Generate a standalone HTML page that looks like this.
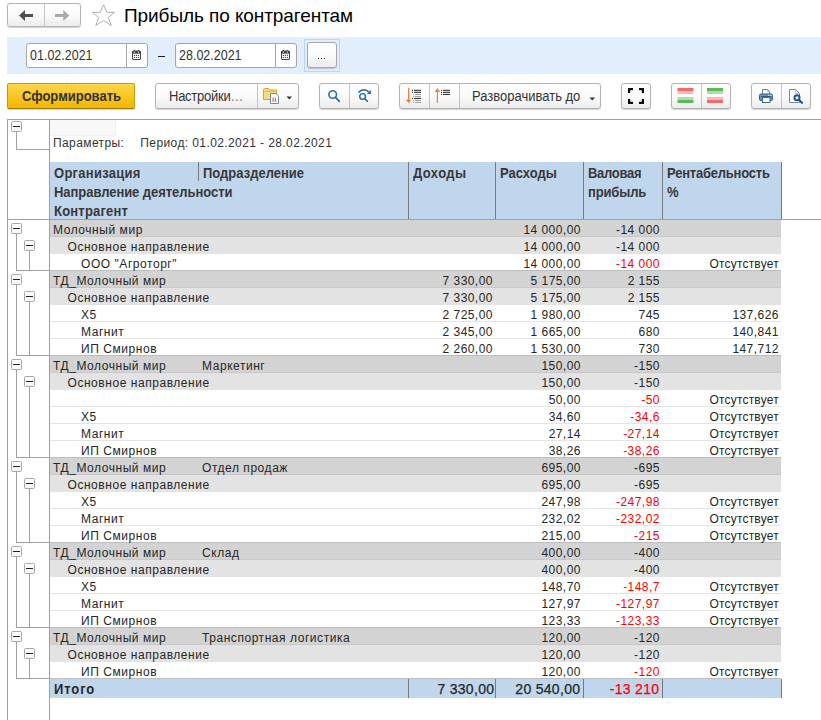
<!DOCTYPE html>
<html><head><meta charset="utf-8"><title>Прибыль по контрагентам</title>
<style>
*{margin:0;padding:0;box-sizing:border-box}
html,body{width:821px;height:720px;overflow:hidden;background:#fff}
body{position:relative;font-family:"Liberation Sans",sans-serif;color:#333}
.abs{position:absolute}
.btn{position:absolute;border:1px solid #b3b3b3;border-radius:3px;background:linear-gradient(#ffffff 0%,#fbfbfb 50%,#ececec 100%);box-shadow:0 1px 1px rgba(0,0,0,0.18)}
.dv{position:absolute;top:0;bottom:0;width:1px;background:#c4c4c4}
.title{position:absolute;left:124px;top:5px;font-size:19px;letter-spacing:-0.08px;color:#000;line-height:22px;white-space:nowrap}
.panel{position:absolute;left:7px;top:37px;width:814px;height:37px;background:#e2eefb}
.inp{position:absolute;top:43px;height:25px;background:#fff;border:1px solid #a6a6a6;border-radius:3px}
.inp .tx{position:absolute;left:3px;top:3px;font-size:12.5px;color:#333;line-height:16px;letter-spacing:0;transform:scaleY(1.1);transform-origin:0 0}
.inp .cd{position:absolute;top:0;bottom:0;width:1px;background:#a6a6a6}
.lbl{position:absolute;white-space:nowrap;line-height:16px}
.tbl{position:absolute;left:0;top:0;width:821px;height:720px}
.tb-top{position:absolute;left:7px;top:119px;width:814px;height:1px;background:#a0a0a0}
.tb-left{position:absolute;left:7px;top:119px;width:1px;height:601px;background:#a0a0a0}
.tb-tree{position:absolute;left:49px;top:119px;width:1px;height:601px;background:#a0a0a0}
.fbox{position:absolute;left:50px;top:120px;width:66px;height:16px;background:#f8f8f8;border:1px solid #f0f0f0;border-top:0;border-left:0}
.bx{position:absolute;width:11px;height:11px;border:1px solid #a8a8a8;border-radius:1.5px;background:linear-gradient(#fff,#f4f4f4)}
.bx:after{content:"";position:absolute;left:1px;top:4px;width:7px;height:1px;background:#222}
.vl{position:absolute;width:1px;background:#a0a0a0}
.hl{position:absolute;height:1px;background:#a0a0a0}
.params{position:absolute;left:53px;top:135px;font-size:12px;letter-spacing:0.4px;line-height:17px;color:#333;white-space:nowrap}
.params .per{margin-left:16px}
.hdr{position:absolute;left:50px;top:162px;width:732px;height:57px;background:#bfd6ed}
.h{position:absolute;font-size:13px;font-weight:bold;letter-spacing:0px;line-height:17px;color:#383838;transform:scaleY(1.08);transform-origin:0 0;white-space:nowrap}
.hv{position:absolute;top:0;width:1px;height:57px;background:#7a7a7a}
.hline{position:absolute;left:7px;width:814px;height:1px;background:#a0a0a0}
.row{position:absolute;left:50px;width:731px;height:17px}
.rg1{background:#d3d3d3;border-bottom:1px solid #c8c8c8}
.rg2{background:#e3e3e3}
.rd{background:#fff;border-bottom:1px solid #e4e4e4}
.rd.last{border-bottom-color:#bdbdbd}
.row span,.tot span{position:absolute;top:2px;font-size:12px;line-height:16px;letter-spacing:0px;color:#262626;white-space:nowrap}
.row .n{letter-spacing:0.45px}
.row .t{letter-spacing:0.55px}
.row .ot{letter-spacing:0.2px}
.red{color:#f00 !important}
.tot{position:absolute;left:50px;width:732px;height:19px;background:#bfd6ed}
.tot span{top:2px}
.tot .it{font-weight:bold;font-size:13px;letter-spacing:0.9px;color:#2a2a2a;transform:scaleY(1.1);transform-origin:0 0}
.tot .tn{font-size:14px;letter-spacing:0.3px;-webkit-text-stroke:0.25px currentColor}
.tv{position:absolute;top:0;width:1px;height:19px;background:#7a7a7a}

</style></head><body>
<div class="btn" style="left:7px;top:3px;width:74px;height:24px"><div class="dv" style="left:36px"></div>
<svg class="abs" style="left:-1px;top:-1px" width="74" height="24" viewBox="7 3 74 24">
<path d="M19 15.4 L25 10 L25 14 L33 14 L33 17 L25 17 L25 21 Z" fill="#4f4f4f"/>
<path d="M69.3 15.4 L63.3 10 L63.3 14 L55 14 L55 17 L63.3 17 L63.3 21 Z" fill="#a9a9a9"/>
</svg></div>
<svg class="abs" style="left:88px;top:2px" width="30" height="26" viewBox="88 2 30 26">
<path d="M103.6 4.8 L106.9 12.3 L114.5 12.3 L108.4 17.5 L111.2 25.5 L103.6 20.5 L95.8 25.5 L98.6 17.5 L92.4 12.3 L100.2 12.3 Z" fill="none" stroke="#aab1b8" stroke-width="1" stroke-linejoin="miter"/>
</svg>
<div class="title">Прибыль по контрагентам</div>
<div class="panel"></div>
<div class="inp" style="left:26px;width:122px"><span class="tx">01.02.2021</span><div class="cd" style="left:99px"></div>
<svg class="abs" style="left:104px;top:5px" width="12" height="12" viewBox="131 49 12 12"><path d="M132.5 52 Q132.5 51 133.5 51 L139.5 51 Q140.5 51 140.5 52 L140.5 59 Q140.5 59.5 140 59.5 L133 59.5 Q132.5 59.5 132.5 59 Z" fill="#fff" stroke="#444" stroke-width="1"/><rect x="132" y="51" width="9" height="2.7" fill="#444"/><rect x="133.9" y="51.6" width="1.1" height="1.1" fill="#fff"/><rect x="137.9" y="51.6" width="1.1" height="1.1" fill="#fff"/><circle cx="134.4" cy="50.4" r="0.6" fill="#444"/><circle cx="138.4" cy="50.4" r="0.6" fill="#444"/><g fill="#444"><circle cx="134.4" cy="55.4" r="0.65"/><circle cx="136.4" cy="55.4" r="0.65"/><circle cx="138.4" cy="55.4" r="0.65"/><circle cx="134.4" cy="57.4" r="0.65"/><circle cx="136.4" cy="57.4" r="0.65"/><circle cx="138.4" cy="57.4" r="0.65"/></g></svg>
</div>
<div class="abs" style="left:158px;top:56px;width:7px;height:1.2px;background:#222"></div>
<div class="inp" style="left:175px;width:122px"><span class="tx">28.02.2021</span><div class="cd" style="left:99px"></div>
<svg class="abs" style="left:104px;top:5px" width="12" height="12" viewBox="131 49 12 12"><path d="M132.5 52 Q132.5 51 133.5 51 L139.5 51 Q140.5 51 140.5 52 L140.5 59 Q140.5 59.5 140 59.5 L133 59.5 Q132.5 59.5 132.5 59 Z" fill="#fff" stroke="#444" stroke-width="1"/><rect x="132" y="51" width="9" height="2.7" fill="#444"/><rect x="133.9" y="51.6" width="1.1" height="1.1" fill="#fff"/><rect x="137.9" y="51.6" width="1.1" height="1.1" fill="#fff"/><circle cx="134.4" cy="50.4" r="0.6" fill="#444"/><circle cx="138.4" cy="50.4" r="0.6" fill="#444"/><g fill="#444"><circle cx="134.4" cy="55.4" r="0.65"/><circle cx="136.4" cy="55.4" r="0.65"/><circle cx="138.4" cy="55.4" r="0.65"/><circle cx="134.4" cy="57.4" r="0.65"/><circle cx="136.4" cy="57.4" r="0.65"/><circle cx="138.4" cy="57.4" r="0.65"/></g></svg>
</div>
<div class="abs" style="left:304px;top:39px;width:36px;height:33px;border:1px solid #b6d8f6;background:#e2eefb"></div>
<div class="btn" style="left:307px;top:42px;width:30px;height:26px;border-color:#a8a8a8"><div class="abs" style="left:10px;top:15px;width:1.2px;height:1.2px;background:#333"></div><div class="abs" style="left:13px;top:15px;width:1.2px;height:1.2px;background:#333"></div><div class="abs" style="left:16px;top:15px;width:1.2px;height:1.2px;background:#333"></div></div>

<div class="btn" style="left:7px;top:83px;width:128px;height:26px;border-color:#c99a00 #c99a00 #a07a00;border-radius:2px;background:linear-gradient(#fed64a,#f3b600)"><span class="lbl" style="left:14px;top:3.5px;font-size:13px;font-weight:bold;color:#333;transform:scaleY(1.08);transform-origin:0 0">Сформировать</span></div>

<div class="btn" style="left:155px;top:83px;width:144px;height:26px"><div class="dv" style="left:101px"></div><span class="lbl" style="left:13px;top:3.5px;font-size:13px;letter-spacing:-0.25px;color:#333;transform:scaleY(1.1);transform-origin:0 0">Настройки</span><span class="lbl" style="left:75px;top:3.5px;font-size:13px;letter-spacing:0.5px;color:#777;transform:scaleY(1.1);transform-origin:0 0">...</span>
<svg class="abs" style="left:106px;top:2px" width="18" height="18" viewBox="262 86 18 18">
<path d="M263.5 89.5 L265 88.5 L268.5 88.5 L269.5 90 L276.5 90 L276.5 99.5 L263.5 99.5 Z" fill="#f7dc82" stroke="#d8a032" stroke-width="1"/><path d="M263.5 91.5 L276.5 91.5" stroke="#e9be55" stroke-width="1"/>
<path d="M270.5 93.5 L276 93.5 L278.5 96 L278.5 103.5 L270.5 103.5 Z" fill="#fff" stroke="#71879a" stroke-width="1"/>
<rect x="272.6" y="97.5" width="1" height="3.5" fill="#e53935"/><rect x="274.8" y="97.5" width="1" height="3.5" fill="#43a047"/><rect x="272" y="101" width="5" height="0.6" fill="#999"/>
</svg>
<svg class="abs" style="left:130px;top:12px" width="7" height="4" viewBox="0 0 7 4"><path d="M0.5 0.5 L6 0.5 L3.25 3.5 Z" fill="#333"/></svg>
</div>

<div class="btn" style="left:319px;top:83px;width:60px;height:26px"><div class="dv" style="left:29px"></div>
<svg class="abs" style="left:-1px;top:-1px" width="60" height="25" viewBox="319 83 60 25">
<circle cx="332.7" cy="94.5" r="3.8" fill="none" stroke="#2a6ea6" stroke-width="1.6"/>
<path d="M335.5 97.3 L339.3 101.3" stroke="#2a6ea6" stroke-width="1.8" stroke-linecap="round"/>
<circle cx="362.6" cy="96.5" r="2.85" fill="none" stroke="#1f68a6" stroke-width="1.4"/>
<path d="M364.8 98.7 L367.4 101.3" stroke="#1f68a6" stroke-width="1.6" stroke-linecap="round"/>
<path d="M358.3 92.6 Q363 87.6 368.6 91.6" fill="none" stroke="#1f68a6" stroke-width="1.5"/>
<path d="M370.9 89.8 L370.9 93.9 L366.8 93.9 Z" fill="#1f68a6"/>
</svg></div>

<div class="btn" style="left:399px;top:83px;width:202px;height:26px"><div class="dv" style="left:29px"></div><div class="dv" style="left:59px"></div>
<svg class="abs" style="left:-1px;top:-1px" width="60" height="25" viewBox="399 83 60 25">
<rect x="408" y="88" width="1.2" height="12" fill="#f08040"/>
<path d="M405.8 99.5 L411.4 99.5 L408.6 103.2 Z" fill="#f08040"/>
<g fill="#222"><rect x="412" y="89.8" width="1" height="1"/><rect x="414" y="89.8" width="7" height="1"/><rect x="412" y="91.8" width="1" height="1"/><rect x="414" y="91.8" width="7" height="1"/><rect x="412" y="97.9" width="1" height="1"/><rect x="414" y="97.9" width="7" height="1"/></g>
<g fill="#999"><rect x="413" y="93.9" width="1" height="1"/><rect x="415" y="93.9" width="6" height="1"/><rect x="413" y="95.9" width="1" height="1"/><rect x="415" y="95.9" width="6" height="1"/><rect x="413" y="99.9" width="1" height="1"/><rect x="415" y="99.9" width="6" height="1"/><rect x="413" y="101.9" width="1" height="1"/><rect x="415" y="101.9" width="6" height="1"/></g>
<rect x="436.8" y="91" width="1.2" height="12" fill="#f08040"/>
<path d="M434.6 92 L440.2 92 L437.4 88 Z" fill="#f08040"/>
<g fill="#222"><rect x="441" y="89.8" width="1" height="1"/><rect x="443" y="89.8" width="7" height="1"/><rect x="441" y="91.8" width="1" height="1"/><rect x="443" y="91.8" width="7" height="1"/><rect x="441" y="93.9" width="1" height="1"/><rect x="443" y="93.9" width="7" height="1"/></g>
</svg>
<span class="lbl" style="left:72px;top:4px;font-size:13px;color:#333;transform:scaleY(1.1);transform-origin:0 0">Разворачивать до</span>
<svg class="abs" style="left:189px;top:13px" width="7" height="4" viewBox="0 0 7 4"><path d="M0.5 0.5 L6 0.5 L3.25 3.5 Z" fill="#333"/></svg>
</div>

<div class="btn" style="left:621px;top:83px;width:30px;height:26px">
<svg class="abs" style="left:-1px;top:-1px" width="30" height="25" viewBox="621 83 30 25">
<g fill="#0a0a0a"><rect x="628" y="88" width="5" height="2.2"/><rect x="628" y="88" width="2.2" height="5"/><rect x="639" y="88" width="5" height="2.2"/><rect x="641.8" y="88" width="2.2" height="5"/><rect x="628" y="101.8" width="5" height="2.2"/><rect x="628" y="99" width="2.2" height="5"/><rect x="639" y="101.8" width="5" height="2.2"/><rect x="641.8" y="99" width="2.2" height="5"/></g>
</svg></div>

<div class="btn" style="left:671px;top:83px;width:60px;height:26px"><div class="dv" style="left:29px"></div>
<svg class="abs" style="left:-1px;top:-1px" width="60" height="25" viewBox="671 83 60 25">
<rect x="677.5" y="88" width="16" height="3" fill="#f26b6b"/><rect x="677.5" y="91" width="16" height="3" fill="#f6b9b9"/>
<rect x="677.5" y="97" width="16" height="3" fill="#b0dab0"/><rect x="677.5" y="100" width="16" height="3" fill="#5cb85c"/>
<rect x="707" y="88" width="16" height="3" fill="#5cb85c"/><rect x="707" y="91" width="16" height="3" fill="#b0dab0"/>
<rect x="707" y="97" width="16" height="3" fill="#f6b9b9"/><rect x="707" y="100" width="16" height="3" fill="#f26b6b"/>
</svg></div>

<div class="btn" style="left:751px;top:83px;width:60px;height:26px"><div class="dv" style="left:29px"></div>
<svg class="abs" style="left:-1px;top:-1px" width="60" height="25" viewBox="751 83 60 25">
<path d="M762.5 94 L762.5 89.5 L767.5 89.5 L769.5 91.5 L769.5 94" fill="#fff" stroke="#6f7f90" stroke-width="1"/>
<path d="M767.5 89.5 L767.5 91.5 L769.5 91.5" fill="none" stroke="#9aa8b6" stroke-width="0.8"/>
<rect x="759.5" y="94" width="13" height="6.5" rx="1.5" fill="#6b95c3" stroke="#2f5c8c" stroke-width="1"/>
<rect x="761" y="96" width="10" height="1" fill="#2f5c8c"/>
<rect x="768.3" y="94.8" width="1.2" height="1" fill="#fff"/><rect x="770.3" y="94.8" width="1.2" height="1" fill="#fff"/>
<rect x="762.5" y="97.5" width="7.5" height="5" fill="#fff" stroke="#3d6a99" stroke-width="1"/>
<path d="M789.5 89.5 L795.5 89.5 L799.5 93.5 L799.5 102.5 L789.5 102.5 Z" fill="#fff" stroke="#74889c" stroke-width="1"/>
<path d="M795.5 89.5 L795.5 93.5 L799.5 93.5" fill="none" stroke="#a8b4c0" stroke-width="0.8"/>
<circle cx="797" cy="97.8" r="2.5" fill="#fff" stroke="#1c5486" stroke-width="2"/>
<path d="M799 100 L802 102.8" stroke="#1c5486" stroke-width="2.2" stroke-linecap="round"/>
</svg></div>

<div class="tbl">
<div class="tb-top"></div>
<div class="tb-left"></div>
<div class="tb-tree"></div>
<div class="fbox"></div>
<div class="bx" style="left:11px;top:121px"></div>
<div class="vl" style="left:16px;top:132px;height:17px"></div>
<div class="hl" style="left:16px;top:149px;width:33px"></div>
<div class="params"><span>Параметры:</span><span class="per">Период: 01.02.2021 - 28.02.2021</span></div>
<div class="hdr">
 <span class="h" style="left:4px;top:2px;letter-spacing:0.27px">Организация</span>
 <span class="h" style="left:4px;top:21px;letter-spacing:-0.05px">Направление деятельности</span>
 <span class="h" style="left:4px;top:40px;letter-spacing:0.2px">Контрагент</span>
 <span class="h" style="left:153px;top:2px;letter-spacing:0px">Подразделение</span>
 <span class="h" style="left:363px;top:2px;letter-spacing:0.4px">Доходы</span>
 <span class="h" style="left:450px;top:2px">Расходы</span>
 <span class="h" style="left:538px;top:2px;letter-spacing:-0.3px">Валовая</span>
 <span class="h" style="left:538px;top:21px;letter-spacing:-0.15px">прибыль</span>
 <span class="h" style="left:617px;top:2px;letter-spacing:-0.22px">Рентабельность</span>
 <span class="h" style="left:617px;top:21px">%</span>
 <div class="hv" style="left:148px;height:19px"></div>
 <div class="hv" style="left:358px"></div>
 <div class="hv" style="left:445px"></div>
 <div class="hv" style="left:533px"></div>
 <div class="hv" style="left:612px"></div>
 <div class="hv" style="left:731px"></div>
</div>
<div class="hline" style="top:219px"></div>
<div class="bx" style="left:11px;top:223px"></div><div class="vl" style="left:16px;top:234px;height:36px"></div><div class="bx" style="left:24px;top:240px"></div><div class="vl" style="left:29px;top:251px;height:19px"></div><div class="hl" style="left:16px;top:270px;width:33px"></div><div class="bx" style="left:11px;top:274px"></div><div class="vl" style="left:16px;top:285px;height:70px"></div><div class="bx" style="left:24px;top:291px"></div><div class="vl" style="left:29px;top:302px;height:53px"></div><div class="hl" style="left:16px;top:355px;width:33px"></div><div class="bx" style="left:11px;top:359px"></div><div class="vl" style="left:16px;top:370px;height:87px"></div><div class="bx" style="left:24px;top:376px"></div><div class="vl" style="left:29px;top:387px;height:70px"></div><div class="hl" style="left:16px;top:457px;width:33px"></div><div class="bx" style="left:11px;top:461px"></div><div class="vl" style="left:16px;top:472px;height:70px"></div><div class="bx" style="left:24px;top:478px"></div><div class="vl" style="left:29px;top:489px;height:53px"></div><div class="hl" style="left:16px;top:542px;width:33px"></div><div class="bx" style="left:11px;top:546px"></div><div class="vl" style="left:16px;top:557px;height:70px"></div><div class="bx" style="left:24px;top:563px"></div><div class="vl" style="left:29px;top:574px;height:53px"></div><div class="hl" style="left:16px;top:627px;width:33px"></div><div class="bx" style="left:11px;top:631px"></div><div class="vl" style="left:16px;top:642px;height:36px"></div><div class="bx" style="left:24px;top:648px"></div><div class="vl" style="left:29px;top:659px;height:19px"></div><div class="hl" style="left:16px;top:678px;width:33px"></div>
<div class="row rg1" style="top:220px"><span class="t" style="left:3px">Молочный мир</span><span class="n" style="right:200.1px">14 000,00</span><span class="n" style="right:121.1px">-14 000</span></div><div class="row rg2" style="top:237px"><span class="t" style="left:17.5px">Основное направление</span><span class="n" style="right:200.1px">14 000,00</span><span class="n" style="right:121.1px">-14 000</span></div><div class="row rd last" style="top:254px"><span class="t" style="left:31px">ООО "Агроторг"</span><span class="n" style="right:200.1px">14 000,00</span><span class="n red" style="right:121.1px">-14 000</span><span class="n ot" style="right:2.1px">Отсутствует</span></div><div class="row rg1" style="top:271px"><span class="t" style="left:3px">ТД_Молочный мир</span><span class="n" style="right:288.1px">7 330,00</span><span class="n" style="right:200.1px">5 175,00</span><span class="n" style="right:121.1px">2 155</span></div><div class="row rg2" style="top:288px"><span class="t" style="left:17.5px">Основное направление</span><span class="n" style="right:288.1px">7 330,00</span><span class="n" style="right:200.1px">5 175,00</span><span class="n" style="right:121.1px">2 155</span></div><div class="row rd" style="top:305px"><span class="t" style="left:31px">Х5</span><span class="n" style="right:288.1px">2 725,00</span><span class="n" style="right:200.1px">1 980,00</span><span class="n" style="right:121.1px">745</span><span class="n" style="right:2.1px">137,626</span></div><div class="row rd" style="top:322px"><span class="t" style="left:31px">Магнит</span><span class="n" style="right:288.1px">2 345,00</span><span class="n" style="right:200.1px">1 665,00</span><span class="n" style="right:121.1px">680</span><span class="n" style="right:2.1px">140,841</span></div><div class="row rd last" style="top:339px"><span class="t" style="left:31px">ИП Смирнов</span><span class="n" style="right:288.1px">2 260,00</span><span class="n" style="right:200.1px">1 530,00</span><span class="n" style="right:121.1px">730</span><span class="n" style="right:2.1px">147,712</span></div><div class="row rg1" style="top:356px"><span class="t" style="left:3px">ТД_Молочный мир</span><span class="t" style="left:152px">Маркетинг</span><span class="n" style="right:200.1px">150,00</span><span class="n" style="right:121.1px">-150</span></div><div class="row rg2" style="top:373px"><span class="t" style="left:17.5px">Основное направление</span><span class="n" style="right:200.1px">150,00</span><span class="n" style="right:121.1px">-150</span></div><div class="row rd" style="top:390px"><span class="n" style="right:200.1px">50,00</span><span class="n red" style="right:121.1px">-50</span><span class="n ot" style="right:2.1px">Отсутствует</span></div><div class="row rd" style="top:407px"><span class="t" style="left:31px">Х5</span><span class="n" style="right:200.1px">34,60</span><span class="n red" style="right:121.1px">-34,6</span><span class="n ot" style="right:2.1px">Отсутствует</span></div><div class="row rd" style="top:424px"><span class="t" style="left:31px">Магнит</span><span class="n" style="right:200.1px">27,14</span><span class="n red" style="right:121.1px">-27,14</span><span class="n ot" style="right:2.1px">Отсутствует</span></div><div class="row rd last" style="top:441px"><span class="t" style="left:31px">ИП Смирнов</span><span class="n" style="right:200.1px">38,26</span><span class="n red" style="right:121.1px">-38,26</span><span class="n ot" style="right:2.1px">Отсутствует</span></div><div class="row rg1" style="top:458px"><span class="t" style="left:3px">ТД_Молочный мир</span><span class="t" style="left:152px">Отдел продаж</span><span class="n" style="right:200.1px">695,00</span><span class="n" style="right:121.1px">-695</span></div><div class="row rg2" style="top:475px"><span class="t" style="left:17.5px">Основное направление</span><span class="n" style="right:200.1px">695,00</span><span class="n" style="right:121.1px">-695</span></div><div class="row rd" style="top:492px"><span class="t" style="left:31px">Х5</span><span class="n" style="right:200.1px">247,98</span><span class="n red" style="right:121.1px">-247,98</span><span class="n ot" style="right:2.1px">Отсутствует</span></div><div class="row rd" style="top:509px"><span class="t" style="left:31px">Магнит</span><span class="n" style="right:200.1px">232,02</span><span class="n red" style="right:121.1px">-232,02</span><span class="n ot" style="right:2.1px">Отсутствует</span></div><div class="row rd last" style="top:526px"><span class="t" style="left:31px">ИП Смирнов</span><span class="n" style="right:200.1px">215,00</span><span class="n red" style="right:121.1px">-215</span><span class="n ot" style="right:2.1px">Отсутствует</span></div><div class="row rg1" style="top:543px"><span class="t" style="left:3px">ТД_Молочный мир</span><span class="t" style="left:152px">Склад</span><span class="n" style="right:200.1px">400,00</span><span class="n" style="right:121.1px">-400</span></div><div class="row rg2" style="top:560px"><span class="t" style="left:17.5px">Основное направление</span><span class="n" style="right:200.1px">400,00</span><span class="n" style="right:121.1px">-400</span></div><div class="row rd" style="top:577px"><span class="t" style="left:31px">Х5</span><span class="n" style="right:200.1px">148,70</span><span class="n red" style="right:121.1px">-148,7</span><span class="n ot" style="right:2.1px">Отсутствует</span></div><div class="row rd" style="top:594px"><span class="t" style="left:31px">Магнит</span><span class="n" style="right:200.1px">127,97</span><span class="n red" style="right:121.1px">-127,97</span><span class="n ot" style="right:2.1px">Отсутствует</span></div><div class="row rd last" style="top:611px"><span class="t" style="left:31px">ИП Смирнов</span><span class="n" style="right:200.1px">123,33</span><span class="n red" style="right:121.1px">-123,33</span><span class="n ot" style="right:2.1px">Отсутствует</span></div><div class="row rg1" style="top:628px"><span class="t" style="left:3px">ТД_Молочный мир</span><span class="t" style="left:152px">Транспортная логистика</span><span class="n" style="right:200.1px">120,00</span><span class="n" style="right:121.1px">-120</span></div><div class="row rg2" style="top:645px"><span class="t" style="left:17.5px">Основное направление</span><span class="n" style="right:200.1px">120,00</span><span class="n" style="right:121.1px">-120</span></div><div class="row rd last" style="top:662px"><span class="t" style="left:31px">ИП Смирнов</span><span class="n" style="right:200.1px">120,00</span><span class="n red" style="right:121.1px">-120</span><span class="n ot" style="right:2.1px">Отсутствует</span></div>
<div class="tot" style="top:679px">
 <span class="t it" style="left:4px">Итого</span>
 <span class="n tn" style="right:287.7px">7 330,00</span>
 <span class="n tn" style="right:201.7px">20 540,00</span>
 <span class="n tn red" style="right:122.7px">-13 210</span>
 <div class="tv" style="left:358px"></div>
 <div class="tv" style="left:445px"></div>
 <div class="tv" style="left:533px"></div>
 <div class="tv" style="left:612px"></div>
 <div class="tv" style="left:731px"></div>
</div>
</div>
</body></html>
